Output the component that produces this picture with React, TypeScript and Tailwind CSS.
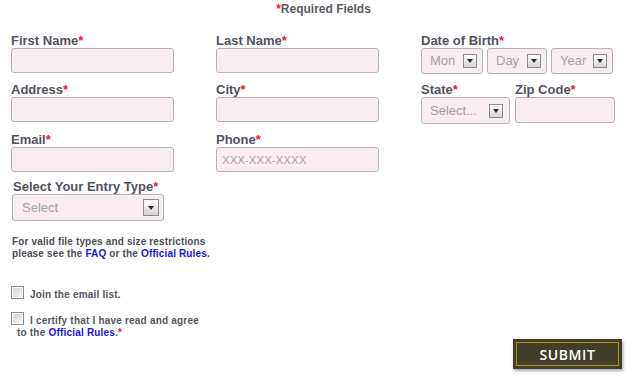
import React from "react";

const Req = () => <span className="text-[#e5202e]">*</span>;

const Label: React.FC<{ text: string; className?: string }> = ({ text, className = "" }) => (
  <label className={"block text-[13px] font-bold leading-[15px] text-[#52525e] " + className}>
    {text}
    <Req />
  </label>
);

const TextInput: React.FC<{ placeholder?: string }> = ({ placeholder }) => (
  <input
    type="text"
    placeholder={placeholder}
    className="block h-[25px] w-[163px] rounded-[3px] border border-[#b4b4b4] bg-[#f8edf0] px-[5px] text-[11.5px] text-[#666] outline-none placeholder:text-[#a6a6a6]"
  />
);

const Arrow: React.FC<{ big?: boolean }> = ({ big }) => (
  <span
    className={
      "flex items-center justify-center border border-[#8c8c8c] bg-linear-to-b from-white to-[#d4d4d4] " +
      (big ? "h-[17px] w-[16px]" : "h-[14px] w-[14px]")
    }
  >
    <span className="h-0 w-0 border-t-[4px] border-r-[3.5px] border-l-[3.5px] border-t-[#2a2a2a] border-r-transparent border-l-transparent" />
  </span>
);

const FakeSelect: React.FC<{ text: string; className: string; big?: boolean }> = ({ text, className, big }) => (
  <div
    className={
      "flex items-center justify-between rounded-[3px] border border-[#b4b4b4] bg-[#f8edf0] text-[13px] text-[#a3a3a3] " +
      className
    }
  >
    <span>{text}</span>
    <Arrow big={big} />
  </div>
);

const Checkbox = () => (
  <span className="block h-[13px] w-[13px] shrink-0 border border-[#8e8e8e] bg-white p-px">
    <span className="block h-full w-full bg-linear-to-br from-[#d2d2d2] to-[#f6f6f6]" />
  </span>
);

export default function App() {
  return (
    <div className="h-[378px] w-[639px] bg-white font-['Liberation_Sans',Arial,sans-serif] text-[#52525e]">
      <div className="h-[33px] pt-[1px] pl-[8px] text-center text-[12px] font-bold leading-[16px] text-[#5a5a62]">
        <Req />
        Required Fields
      </div>

      <div className="grid grid-cols-[163px_163px_194px] items-start gap-x-[42px] gap-y-[8px] pl-[11px]">
        <div>
          <Label text="First Name" />
          <TextInput />
        </div>
        <div>
          <Label text="Last Name" />
          <TextInput />
        </div>
        <div>
          <Label text="Date of Birth" />
          <div className="flex gap-[4px]">
            <FakeSelect text="Mon" className="h-[26px] w-[62px] pr-[5px] pl-[8px]" />
            <FakeSelect text="Day" className="h-[26px] w-[60px] pr-[5px] pl-[8px]" />
            <FakeSelect text="Year" className="h-[26px] w-[62px] pr-[5px] pl-[8px]" />
          </div>
        </div>

        <div>
          <Label text="Address" />
          <TextInput />
        </div>
        <div>
          <Label text="City" />
          <TextInput />
        </div>
        <div className="flex gap-[5px]">
          <div>
            <Label text="State" />
            <FakeSelect text="Select..." className="h-[27px] w-[89px] pr-[6px] pl-[8px]" />
          </div>
          <div>
            <Label text="Zip Code" />
            <div className="h-[26px] w-[100px] rounded-[3px] border border-[#b4b4b4] bg-[#f8edf0]" />
          </div>
        </div>

        <div>
          <Label text="Email" />
          <TextInput />
        </div>
        <div>
          <Label text="Phone" />
          <TextInput placeholder="XXX-XXX-XXXX" />
        </div>
      </div>

      <div className="mt-[7px] pl-[12px]">
        <Label text="Select Your Entry Type" className="ml-[1px]" />
        <FakeSelect text="Select" big className="h-[27px] w-[152px] pr-[4px] pl-[9px]" />
      </div>

      <p className="mt-[15px] pl-[12px] text-[10px] leading-[12px] font-bold tracking-[0.15px] text-[#4e4e56]">
        For valid file types and size restrictions
        <br />
        please see the <a className="text-[#1414e6]">FAQ</a> or the{" "}
        <a className="text-[#1414e6]">Official Rules</a>.
      </p>

      <div className="mt-[26px] flex gap-[6px] pl-[11px] text-[10px] font-bold tracking-[0.2px] text-[#55555c]">
        <Checkbox />
        <span className="pt-[3px] leading-[12px]">Join the email list.</span>
      </div>

      <div className="mt-[11px] pl-[11px] text-[10px] font-bold tracking-[0.2px] text-[#55555c]">
        <div className="flex gap-[6px]">
          <Checkbox />
          <span className="pt-[3px] leading-[12px]">I certify that I have read and agree</span>
        </div>
        <div className="pl-[6px] leading-[11px]">
          to the <a className="text-[#1414e6]">Official Rules</a>.<Req />
        </div>
      </div>

      <div className="mt-[1px] flex justify-end pr-[17px]">
        <button className="h-[30px] w-[109px] bg-[#403f2b] p-[3px] shadow-[1px_2px_3px_rgba(0,0,0,0.35)]">
          <span className="flex h-full w-full items-center justify-center border-[1.5px] border-[#b68e12] font-['Open_Sans',sans-serif] text-[14px] font-semibold tracking-[0.6px] text-white">
            SUBMIT
          </span>
        </button>
      </div>
    </div>
  );
}
